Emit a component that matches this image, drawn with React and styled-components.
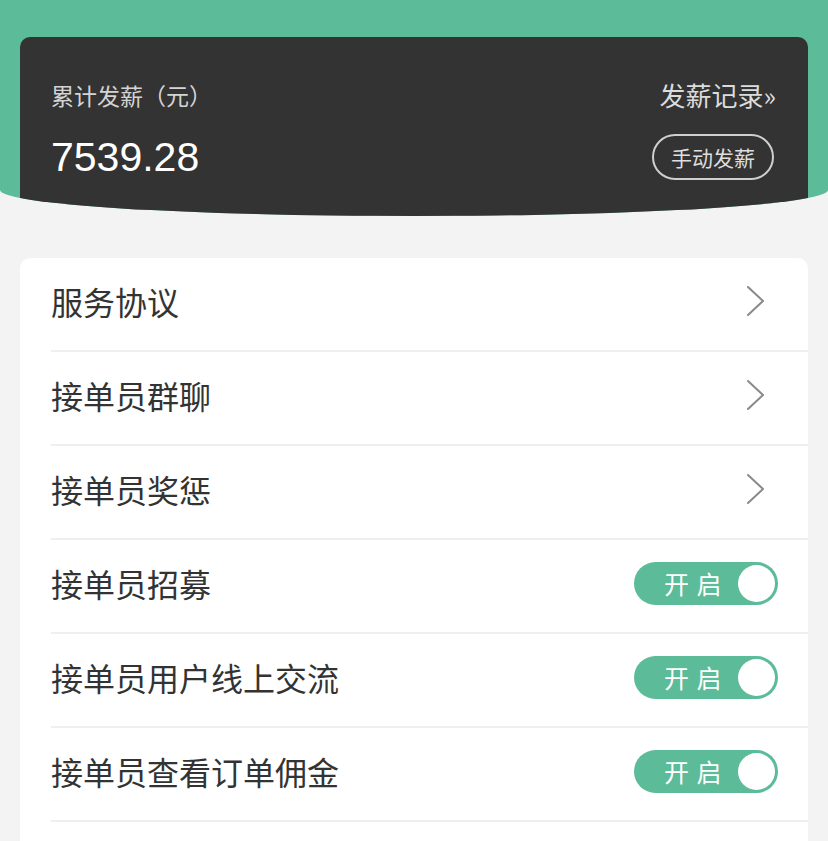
import React from "react";
import styled, { createGlobalStyle } from "styled-components";

const GlobalStyle = createGlobalStyle`
  body {
    margin: 0;
    background: #f3f3f3;
    font-family: "Noto Sans CJK SC", "Noto Sans", sans-serif;
  }
`;

const items = [
  { title: "服务协议", type: "link" },
  { title: "接单员群聊", type: "link" },
  { title: "接单员奖惩", type: "link" },
  { title: "接单员招募", type: "switch" },
  { title: "接单员用户线上交流", type: "switch" },
  { title: "接单员查看订单佣金", type: "switch" },
];

const App = () => {
  return (
    <>
      <GlobalStyle />
      <Page>
        <Header>
          <SummaryCard>
            <SummaryRow>
              <Label>累计发薪（元）</Label>
              <RecordLink>发薪记录»</RecordLink>
            </SummaryRow>
            <SummaryRow>
              <Amount>7539.28</Amount>
              <PayButton>手动发薪</PayButton>
            </SummaryRow>
          </SummaryCard>
        </Header>
        <ListCard>
          {items.map((item) => (
            <Row key={item.title}>
              <RowTitle>{item.title}</RowTitle>
              {item.type === "link" ? (
                <Chevron width="20" height="32" viewBox="0 0 20 32">
                  <path
                    d="M2 2 L17 16 L2 30"
                    fill="none"
                    stroke="#8a8a8a"
                    strokeWidth="2"
                    strokeLinecap="round"
                    strokeLinejoin="round"
                  />
                </Chevron>
              ) : (
                <Switch>
                  <SwitchText>开 启</SwitchText>
                  <Knob />
                </Switch>
              )}
            </Row>
          ))}
        </ListCard>
      </Page>
    </>
  );
};

const Page = styled.div`
  width: 828px;
  min-height: 841px;
  background: #f3f3f3;
`;

const Header = styled.header`
  height: 216px;
  box-sizing: border-box;
  padding: 37px 20px 0;
  background: #5cbb98;
  overflow: hidden;
  border-radius: 0 0 50% 50% / 0 0 26px 26px;
  display: flex;
`;

const SummaryCard = styled.div`
  flex: 1;
  background: #333333;
  border-radius: 10px 10px 0 0;
  padding: 41px 32px 0 31px;
  display: flex;
  flex-direction: column;
  gap: 22px;
`;

const SummaryRow = styled.div`
  display: flex;
  align-items: center;
  justify-content: space-between;
  min-height: 34px;
`;

const Label = styled.span`
  font-size: 23px;
  color: #d4d4d4;
  line-height: 34px;
`;

const RecordLink = styled.span`
  font-size: 26px;
  color: #dcdcdc;
  line-height: 34px;
`;

const Amount = styled.span`
  font-family: "Liberation Sans", Arial, sans-serif;
  font-size: 41px;
  color: #ffffff;
  line-height: 46px;
`;

const PayButton = styled.button`
  width: 122px;
  height: 46px;
  box-sizing: border-box;
  border: 2px solid #cfcfcf;
  border-radius: 23px;
  background: transparent;
  color: #dedede;
  font-family: "Noto Sans CJK SC", sans-serif;
  font-size: 21px;
  padding: 0;
  margin-right: 2px;
`;

const ListCard = styled.div`
  margin: 42px 20px 0;
  padding-bottom: 40px;
  background: #ffffff;
  border-radius: 10px;
  overflow: hidden;
`;

const Row = styled.div`
  height: 94px;
  box-sizing: border-box;
  margin-left: 31px;
  padding: 0 30px 6px 0;
  display: flex;
  align-items: center;
  justify-content: space-between;
  border-bottom: 2px solid #efefef;
`;

const RowTitle = styled.span`
  font-size: 32px;
  color: #333333;
`;

const Chevron = styled.svg`
  margin-right: 12px;
  display: block;
`;

const Switch = styled.div`
  width: 144px;
  height: 43px;
  border-radius: 22px;
  background: #5cbb98;
  display: flex;
  align-items: center;
  justify-content: space-between;
  padding: 0 3px 0 30px;
  box-sizing: border-box;
`;

const SwitchText = styled.span`
  font-size: 25px;
  color: #ffffff;
  letter-spacing: 1px;
`;

const Knob = styled.span`
  width: 37px;
  height: 37px;
  border-radius: 50%;
  background: #ffffff;
`;

export default App;
